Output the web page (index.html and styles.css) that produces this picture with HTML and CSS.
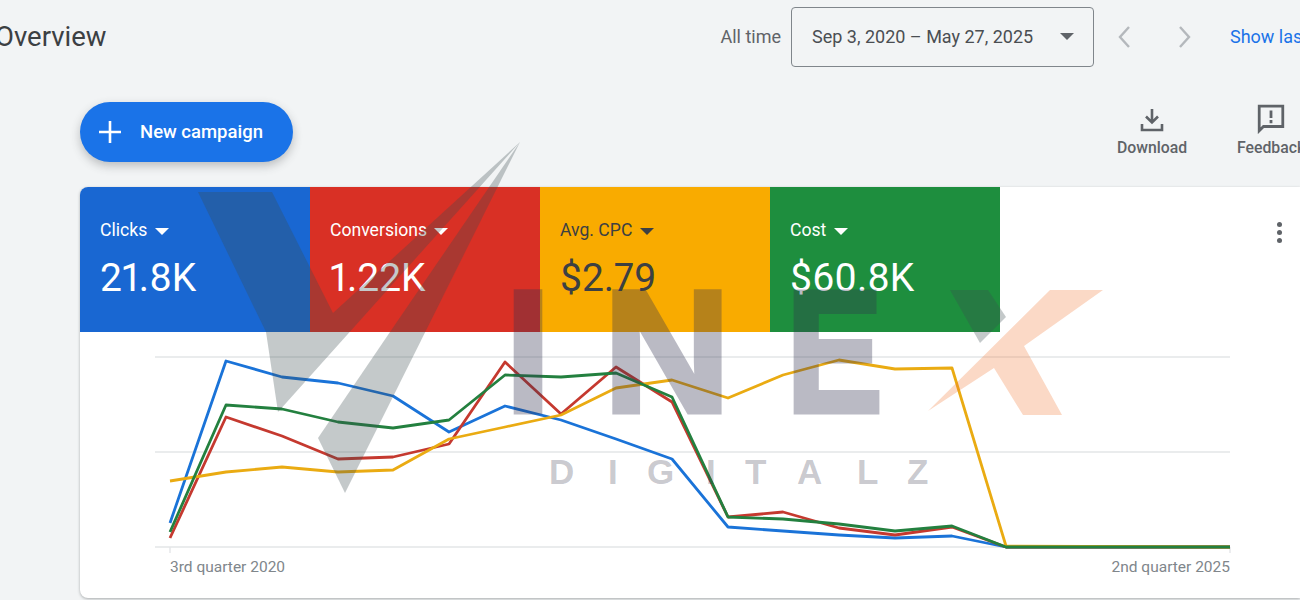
FILE: index.html
```html
<!DOCTYPE html>
<html lang="en">
<head>
  <meta charset="UTF-8" />
  <title>Overview</title>
  <link rel="stylesheet" href="styles.css">
</head>
<body>

  <header class="topbar">
    <h1 class="page-title">Overview</h1>
    <span class="range-label">All time</span>
    <div class="date-select">
      <span>Sep 3, 2020 – May 27, 2025</span>
      <span class="caret caret-grey"></span>
    </div>
    <svg class="chevron" viewBox="0 0 16 28"><path d="M13 4 L4 14 L13 24" /></svg>
    <svg class="chevron" viewBox="0 0 16 28"><path d="M3 4 L12 14 L3 24" /></svg>
    <a class="show-last">Show last 30 days</a>
  </header>

  <section class="actions">
    <button class="new-campaign">
      <svg class="plus" viewBox="0 0 22 22"><path d="M11 0 V22 M0 11 H22" /></svg>
      New campaign
    </button>
    <div class="tools">
      <div class="tool tool-download">
        <svg viewBox="0 0 24 24"><path d="M12 1 V14 M6 8.5 L12 14.5 L18 8.5 M2 16 V22 H22 V16" /></svg>
        <span>Download</span>
      </div>
      <div class="tool tool-feedback">
        <svg viewBox="0 0 28 28"><path d="M3 2 H25 V21 H7 L3 25 Z M14 6 V13 M14 15 V18" /></svg>
        <span>Feedback</span>
      </div>
    </div>
  </section>

  <section class="card">
    <div class="card-top">
      <div class="score score-blue">
        <div class="score-name">Clicks <span class="caret"></span></div>
        <div class="score-value">21.8K</div>
      </div>
      <div class="score score-red">
        <div class="score-name">Conversions <span class="caret"></span></div>
        <div class="score-value">1.22K</div>
      </div>
      <div class="score score-yellow">
        <div class="score-name">Avg. CPC <span class="caret"></span></div>
        <div class="score-value">$2.79</div>
      </div>
      <div class="score score-green">
        <div class="score-name">Cost <span class="caret"></span></div>
        <div class="score-value">$60.8K</div>
      </div>
      <div class="kebab"><i></i><i></i><i></i></div>
    </div>

    <svg class="chart" viewBox="80 332 1220 222">
      <path class="grid" d="M155 357 H1230 M155 452 H1230 M155 547 H1230 M170 547 V553 M1230 547 V553" />
      <polyline class="line line-blue" points="170,523 226,361 282,377 338,383 393,396 449,432 505,406 561,420 616,439 672,459 728,527 783,531 839,535 895,538 952,536 1006,547 1230,547" />
      <polyline class="line line-red" points="170,538 226,417 282,436 338,459 393,457 449,444 505,362 561,414 616,367 672,402 728,517 783,512 839,528 895,535 952,527 1006,547 1230,547" />
      <polyline class="line line-yellow" points="170,481 226,472 282,467 338,472 393,470 449,439 505,427 561,415 616,388 672,380 728,398 783,375 839,360 895,369 952,368 1006,546 1230,547" />
      <polyline class="line line-green" points="170,532 226,405 282,409 338,422 393,428 449,420 505,375 561,377 616,373 672,397 728,517 783,519 839,524 895,531 952,526 1006,547 1230,547" />
    </svg>
    <div class="axis-labels">
      <span>3rd quarter 2020</span>
      <span>2nd quarter 2025</span>
    </div>
  </section>

  <!-- watermark over the whole shot -->
  <svg class="watermark" viewBox="0 0 1300 600">
    <defs>
      <clipPath id="x-clip">
        <polygon points="1050,290 1103,290 1024,346 1062,415 1023,415 994,368 928,411" />
      </clipPath>
    </defs>
    <polygon class="mark-v" points="198,192 272,192 333,313 520,142 278,412 266,332" />
    <polygon class="mark-v" points="520,142 390,332 318,438 345,493" />
    <polygon class="mark-v" points="950,290 988,290 1006,317 980,343" />
    <text class="mark-word" x="505" y="412" textLength="46" lengthAdjust="spacingAndGlyphs">I</text>
    <text class="mark-word" x="603" y="412" textLength="128" lengthAdjust="spacingAndGlyphs">N</text>
    <text class="mark-word" x="786" y="412" textLength="97" lengthAdjust="spacingAndGlyphs">E</text>
    <g clip-path="url(#x-clip)">
      <text class="mark-x" transform="translate(912,415) skewX(-16)" textLength="175" lengthAdjust="spacingAndGlyphs">X</text>
    </g>
    <text class="mark-sub" x="549 608 647 706 745 797 857 907" y="484">DIGITALZ</text>
  </svg>

</body>
</html>
```

FILE: styles.css
```css
* {
  box-sizing: border-box;
}

body {
  margin: 0;
  width: 1300px;
  height: 600px;
  overflow: hidden;
  position: relative;
  background-color: #F2F4F5;
  color: #3C4043;
  font-family: Roboto, "Liberation Sans", sans-serif;
}

.topbar {
  display: flex;
  align-items: center;
  height: 59px;
  margin-top: 7px;
}

.page-title {
  flex: 1;
  margin: 0 0 0 -5px;
  font-size: 27.5px;
  font-weight: 400;
}

.range-label {
  margin-right: 10px;
  font-size: 18px;
  color: #5F6368;
}

.date-select {
  display: flex;
  align-items: center;
  justify-content: space-between;
  width: 303px;
  height: 60px;
  padding: 0 19px 0 20px;
  border: 1px solid #80868B;
  border-radius: 4px;
  font-size: 18px;
  color: #4A4E52;
}

.chevron {
  width: 16px;
  height: 28px;
  margin-left: 22px;
  margin-right: 22px;
  fill: none;
  stroke: #B4B8BC;
  stroke-width: 2.4;
}

.chevron + .chevron {
  margin-left: 23px;
  margin-right: 37px;
}

.show-last {
  width: 70px;
  overflow: hidden;
  white-space: nowrap;
  font-size: 18px;
  color: #1A73E8;
}

.caret {
  display: inline-block;
  width: 0;
  height: 0;
  margin-left: 3px;
  vertical-align: middle;
  border-left: 7px solid transparent;
  border-right: 7px solid transparent;
  border-top: 7px solid currentColor;
}

.caret-grey {
  color: #5F6368;
}

.actions {
  display: flex;
  justify-content: space-between;
  height: 121px;
  padding-top: 36px;
  padding-left: 80px;
}

.new-campaign {
  display: flex;
  align-items: center;
  gap: 19px;
  width: 213px;
  height: 60px;
  padding: 0 0 1px 19px;
  border: 0;
  border-radius: 30px;
  background-color: #1A73E8;
  box-shadow: 0 4px 10px rgba(60,64,67,0.3);
  color: #FFFFFF;
  font-family: inherit;
  font-size: 18.5px;
  font-weight: 500;
}

.plus {
  width: 22px;
  height: 22px;
  fill: none;
  stroke: #FFFFFF;
  stroke-width: 2.6;
}

.tools {
  display: flex;
  width: 183px;
  flex-shrink: 0;
}

.tool {
  display: flex;
  flex-direction: column;
  align-items: center;
  flex-shrink: 0;
  width: 70px;
  font-size: 15.8px;
  font-weight: 500;
  color: #5F6368;
  white-space: nowrap;
}

.tool-download {
  margin-right: 50px;
}

.tool-feedback {
  align-items: flex-start;
}

.tool svg {
  fill: none;
  stroke: #5F6368;
  stroke-width: 2.6;
}

.tool-download svg {
  width: 24px;
  height: 24px;
  margin-top: 6px;
  margin-bottom: 6px;
}

.tool-feedback svg {
  width: 30px;
  height: 30px;
  margin-top: 2px;
  margin-bottom: 4px;
  margin-left: 19px;
}

.card {
  width: 1220px;
  height: 411px;
  margin-left: 80px;
  border-radius: 8px 0 0 8px;
  background-color: #FFFFFF;
  box-shadow: 0 1px 3px rgba(60,64,67,0.4);
  overflow: hidden;
}

.card-top {
  display: flex;
  height: 145px;
}

.score {
  width: 230px;
  padding: 32px 20px 0;
  color: #FFFFFF;
}

.score-blue { background-color: #1967D2; }
.score-red { background-color: #D93025; }
.score-yellow { background-color: #F9AB00; color: #3C4043; }
.score-green { background-color: #1E8E3E; }

.score-name {
  font-size: 17.6px;
  line-height: 22px;
}

.score-value {
  margin-top: 14px;
  font-size: 39px;
  line-height: 46px;
  font-variant-numeric: proportional-nums;
}

.kebab {
  display: flex;
  flex-direction: column;
  gap: 3px;
  margin-left: auto;
  margin-right: 18px;
  margin-top: 35px;
}

.kebab i {
  display: block;
  width: 5px;
  height: 5px;
  border-radius: 50%;
  background-color: #5F6368;
}

.chart {
  display: block;
  width: 1220px;
  height: 222px;
}

.grid {
  fill: none;
  stroke: #E4E6E8;
  stroke-width: 1.4;
}

.line {
  fill: none;
  stroke-width: 2.8;
  stroke-linejoin: round;
}

.line-blue { stroke: #1A73D8; }
.line-red { stroke: #C5392F; }
.line-yellow { stroke: #EAAB12; }
.line-green { stroke: #23803F; }

.axis-labels {
  display: flex;
  justify-content: space-between;
  padding: 4px 70px 0 90px;
  font-size: 15.5px;
  color: #80868B;
}

.watermark {
  position: absolute;
  top: 0;
  left: 0;
  width: 1300px;
  height: 600px;
  pointer-events: none;
}

.mark-v {
  fill: rgba(60,75,80,0.3);
}

.mark-word {
  font-family: "Liberation Sans", sans-serif;
  font-size: 175px;
  font-weight: 700;
  fill: #323250;
  stroke: #323250;
  stroke-width: 5px;
  opacity: 0.33;
}

.mark-x {
  font-family: "Liberation Sans", sans-serif;
  font-size: 182px;
  font-weight: 700;
  fill: #F07832;
  stroke: #F07832;
  stroke-width: 34px;
  opacity: 0.28;
}

.mark-sub {
  font-family: "Liberation Sans", sans-serif;
  font-size: 35px;
  font-weight: 700;
  fill: rgba(50,50,70,0.27);
}
```
